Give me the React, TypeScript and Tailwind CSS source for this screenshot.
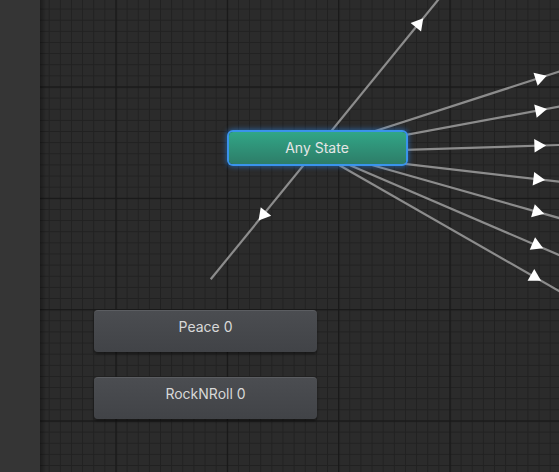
type Pt = [number, number];

// transitions fanning out of Any State: two measured points per line, arrow x
const fan: { a: Pt; b: Pt; ax: number }[] = [
  { a: [400, 123], b: [559, 71.7], ax: 539.3 },
  { a: [400, 136], b: [559, 106.7], ax: 539.3 },
  { a: [400, 150], b: [559, 145], ax: 538.3 },
  { a: [400, 163.3], b: [559, 181.7], ax: 537.3 },
  { a: [400, 173], b: [559, 218], ax: 536.7 },
  { a: [400, 186.7], b: [559, 255], ax: 536 },
  { a: [400, 200], b: [559, 291], ax: 534.3 },
];

const arrow = (c: Pt, dx: number, dy: number, r = 7.8) => {
  const len = Math.hypot(dx, dy);
  const ux = dx / len;
  const uy = dy / len;
  const pts: string[] = [];
  for (const ang of [0, (2 * Math.PI) / 3, (-2 * Math.PI) / 3]) {
    const cx = ux * Math.cos(ang) - uy * Math.sin(ang);
    const cy = ux * Math.sin(ang) + uy * Math.cos(ang);
    pts.push(`${c[0] + cx * r},${c[1] + cy * r}`);
  }
  return pts.join(" ");
};

const GraphDrawing = () => {
  const diagA: Pt = [210.7, 279.3];
  const diagB: Pt = [438, 0];
  const dm = (diagB[1] - diagA[1]) / (diagB[0] - diagA[0]);
  const diagY = (x: number) => diagA[1] + (x - diagA[0]) * dm;

  return (
    <svg
      className="absolute inset-0"
      width={519}
      height={472}
      viewBox="40 0 519 472"
    >
      <defs>
        <pattern
          id="minor"
          patternUnits="userSpaceOnUse"
          x={115.5}
          y={86.5}
          width={11.133}
          height={11.133}
        >
          <rect x={0} y={0} width={1} height={11.133} fill="#212121" />
          <rect x={0} y={0} width={11.133} height={1} fill="#212121" />
        </pattern>
        <pattern
          id="major"
          patternUnits="userSpaceOnUse"
          x={115.5}
          y={86.5}
          width={111.33}
          height={111.33}
        >
          <rect x={0} y={0} width={1.2} height={111.33} fill="#181818" />
          <rect x={0} y={0} width={111.33} height={1.2} fill="#181818" />
        </pattern>
        <linearGradient id="edge" x1="0" x2="1" y1="0" y2="0">
          <stop offset="0" stopColor="#000" stopOpacity="0.35" />
          <stop offset="1" stopColor="#000" stopOpacity="0" />
        </linearGradient>
      </defs>
      <rect x={40} y={0} width={519} height={472} fill="#2b2b2b" />
      <rect x={40} y={0} width={519} height={472} fill="url(#minor)" />
      <rect x={40} y={0} width={519} height={472} fill="url(#major)" />
      <rect x={40} y={0} width={6} height={472} fill="url(#edge)" />

      {/* Any State <-> off-screen / Peace */}
      <line
        x1={diagA[0]}
        y1={diagA[1]}
        x2={460}
        y2={diagY(460)}
        stroke="#8c8c8c"
        strokeWidth={2.2}
      />
      <polygon
        points={arrow([418.3, diagY(418.3)], 1, dm)}
        fill="#ffffff"
      />
      <polygon
        points={arrow([263.5, diagY(263.5)], -1, -dm)}
        fill="#ffffff"
      />

      {fan.map((l, i) => {
        const m = (l.b[1] - l.a[1]) / (l.b[0] - l.a[0]);
        const y = (x: number) => l.a[1] + (x - l.a[0]) * m;
        return (
          <g key={i}>
            <line
              x1={325}
              y1={y(325)}
              x2={575}
              y2={y(575)}
              stroke="#8c8c8c"
              strokeWidth={2.2}
            />
            <polygon points={arrow([l.ax, y(l.ax)], 1, m)} fill="#ffffff" />
          </g>
        );
      })}
    </svg>
  );
};

const StateNode = ({ label, top }: { label: string; top: number }) => (
  <div
    className="absolute left-[54px] w-[223px] h-[42px] rounded-[4px] border-t border-[#5b5d61] bg-gradient-to-b from-[#4b4d51] to-[#414347] shadow-[0_2px_3px_rgba(0,0,0,0.45)] text-center text-[14px] leading-[16px] pt-[8px] text-[#d8d8d8]"
    style={{ top }}
  >
    {label}
  </div>
);

export default function App() {
  return (
    <div
      className="flex w-[559px] h-[472px] overflow-hidden bg-[#2b2b2b]"
      style={{ fontFamily: "Inter, 'Liberation Sans', sans-serif" }}
    >
      <div className="w-[40px] shrink-0 bg-[#353535]" />
      <div className="relative flex-1 overflow-hidden">
        <GraphDrawing />

        <div className="absolute left-[188.5px] top-[132px] w-[177px] h-[31.5px] rounded-[4px] bg-gradient-to-b from-[#31a687] to-[#2d7d68] ring-2 ring-[#3a93ec] shadow-[0_0_5px_3px_rgba(40,130,230,0.55)] flex items-center justify-center text-[14px] text-[#e6e6e6]">
          Any State
        </div>

        <StateNode label="Peace 0" top={310} />
        <StateNode label="RockNRoll 0" top={377} />
      </div>
    </div>
  );
}
